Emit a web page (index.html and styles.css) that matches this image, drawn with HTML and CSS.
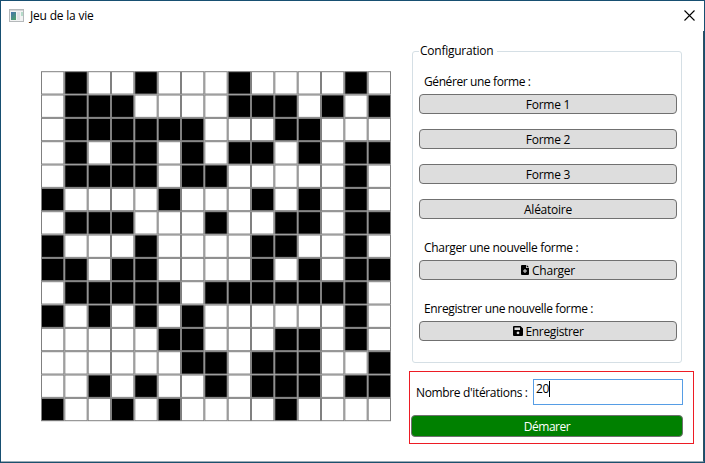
FILE: index.html
```
<!DOCTYPE html>
<html lang="fr">
<head>
<meta charset="utf-8">
<title>Jeu de la vie</title>
<link rel="stylesheet" href="styles.css">
</head>
<body>
<div class="window">
  <header class="titlebar">
    <svg class="app-icon" width="15" height="13" viewBox="0 0 15 13">
      <defs><linearGradient id="screen" x1="0" y1="0" x2="0.6" y2="1"><stop offset="0" stop-color="#4472ae"/><stop offset="1" stop-color="#4c9c70"/></linearGradient></defs>
      <rect x="0.5" y="0.5" width="14" height="12" fill="#f2f3f3" stroke="#b5b9bb"/>
      <path d="M1 1.5h13" stroke="#d2d5d6"/>
      <rect x="2" y="3" width="5" height="8" fill="url(#screen)"/>
      <rect x="8" y="3" width="3" height="8" fill="#dfe2e5"/>
      <rect x="12" y="3" width="2" height="4" fill="#b5dbc9"/>
    </svg>
    <h1 class="title">Jeu de la vie</h1>
    <svg class="close" width="11" height="11" viewBox="0 0 11 11"><path d="M0.5 0.5l10 10M10.5 0.5l-10 10" fill="none" stroke="#000" stroke-width="1.1"/></svg>
  </header>
  <main class="content">
    <svg class="board" width="351" height="351" viewBox="0 0 351 351"></svg>
    <section class="side">
      <fieldset class="config">
        <legend class="legend">Configuration</legend>
        <p class="label label-generate">Générer une forme :</p>
        <div class="shapes">
          <button class="btn">Forme 1</button>
          <button class="btn">Forme 2</button>
          <button class="btn">Forme 3</button>
          <button class="btn btn-random">Aléatoire</button>
        </div>
        <p class="label label-load">Charger une nouvelle forme :</p>
        <button class="btn btn-load">
          <svg class="btn-icon" width="8" height="10" viewBox="0 0 8 10"><path fill="#000" fill-rule="evenodd" d="M1 0h4v3h3v6q0 1-1 1H1q-1 0-1-1V1q0-1 1-1zM3.5 4v1.5H2v1h1.5V8h1V6.500H6v-1H4.500V4z"/><path d="M5.700 0L8 2.300H5.700z"/></svg>
          <span>Charger</span>
        </button>
        <p class="label label-save">Enregistrer une nouvelle forme :</p>
        <button class="btn btn-save">
          <svg class="btn-icon" width="10" height="10" viewBox="0 0 10 10"><path fill="#000" fill-rule="evenodd" d="M1 0h6.500L10 2.500V9q0 1-1 1H1q-1 0-1-1V1q0-1 1-1zM1.500 1.500V4h5.500V1.500zM5 5.500a1.400 1.400 0 1 0 0.010 0z"/></svg>
          <span>Enregistrer</span>
        </button>
      </fieldset>
      <div class="run">
        <div class="run-row">
          <label class="iterations-label" for="iterations">Nombre d'itérations :</label>
          <div class="field" id="iterations"><span class="value">20</span><i class="caret"></i></div>
        </div>
        <button class="btn start">Démarer</button>
      </div>
    </section>
  </main>
</div>
<script src="board.js"></script>
</body>
</html>
```
FILE: styles.css
```
* { box-sizing: border-box; }
body {
  margin: 0;
  font: 12px/16px "Open Sans", "Noto Sans", sans-serif;
  color: #000;
}
.window {
  width: 705px;
  height: 463px;
  overflow: hidden;
  background: #fff;
  border: 1px solid #174f71;
  border-bottom-color: #1c506d;
}
.titlebar {
  display: flex;
  align-items: center;
  height: 30px;
  padding: 0 9px 0 8px;
}
.app-icon { margin-top: -2px; }
.title {
  flex: 1;
  margin: 0 0 0 6px;
  font-size: 12px;
  font-weight: 400;
  letter-spacing: -0.2px;
}
.close { margin-top: -1px; }
.content {
  display: flex;
  align-items: flex-start;
  height: 431px;
  padding-left: 40px;
  border-right: 1px solid #304f60;
  border-bottom: 1px solid #9badb8;
}
.board { display: block; flex: none; margin-top: 40px; }
.side { width: 285px; margin: 12px 0 0 17px; }
.config {
  display: flex;
  flex-direction: column;
  width: 270px;
  height: 320px;
  margin: 0 0 0 3px;
  padding: 0 4px 0 6px;
  border: 1px solid #d5dfe5;
  border-radius: 3px;
}
.legend {
  height: 16px;
  padding: 0 4px 0 1px;
  letter-spacing: -0.25px;
}
.label { margin: 0 0 0 5px; height: 16px; white-space: nowrap; }
.label-generate { margin-top: 15px; letter-spacing: -0.4px; }
.label-load { margin-top: 21px; letter-spacing: -0.32px; }
.label-save { margin-top: 21px; letter-spacing: -0.35px; }
.shapes { display: flex; flex-direction: column; gap: 15px; margin-top: 4px; }
.btn {
  display: flex;
  align-items: center;
  justify-content: center;
  gap: 3px;
  width: 258px;
  height: 20px;
  padding: 1px 0 0;
  background: #ddd;
  border: 1px solid #707070;
  border-radius: 4px;
  font: inherit;
  color: #000;
  letter-spacing: -0.25px;
}
.btn-load, .btn-save { margin-top: 4px; }
.btn-icon { margin-top: -2px; }
.btn-save { letter-spacing: -0.35px; }
.run {
  width: 285px;
  height: 73px;
  margin-top: 8px;
  padding: 7px 0 0 1px;
  border: 1px solid #ed1c24;
}
.run-row { display: flex; }
.iterations-label {
  width: 117px;
  padding: 6px 0 0 5px;
  white-space: nowrap;
  letter-spacing: -0.35px;
}
.field {
  display: flex;
  width: 150px;
  height: 26px;
  margin-left: 5px;
  padding: 1px 2px;
  border: 1px solid #569de5;
}
.value { letter-spacing: -0.4px; }
.caret { width: 1px; height: 16px; background: #000; }
.start {
  width: 272px;
  height: 22px;
  margin-top: 10px;
  background: #008000;
  color: #fff;
  letter-spacing: -0.45px;
}
```
FILE: board.js
```
const rows = [
  ".#..#...#....#.",
  ".###....###.#.#",
  ".######...##...",
  ".#.##.#.##.#.##",
  ".####.##.....#.",
  "#....#...#.#.#.",
  ".###...#..##.##",
  "#...#....##..#.",
  "##.##....#.#.##",
  ".#####.#######.",
  "#.#.#.#......#.",
  ".....##...##.#.",
  "......##.###..#",
  "..#.#..#.###.##",
  "#..#.#....#...."
];
const size = 350 / 15;
const board = document.querySelector(".board");
rows.forEach((row, y) => [...row].forEach((cell, x) => {
  const rect = document.createElementNS("http://www.w3.org/2000/svg", "rect");
  rect.setAttribute("x", x * size + 0.5);
  rect.setAttribute("y", y * size + 0.7);
  rect.setAttribute("width", size - 1);
  rect.setAttribute("height", size - 1);
  rect.setAttribute("fill", cell === "#" ? "#000" : "#fff");
  rect.setAttribute("stroke", "#808080");
  board.appendChild(rect);
}));
```
